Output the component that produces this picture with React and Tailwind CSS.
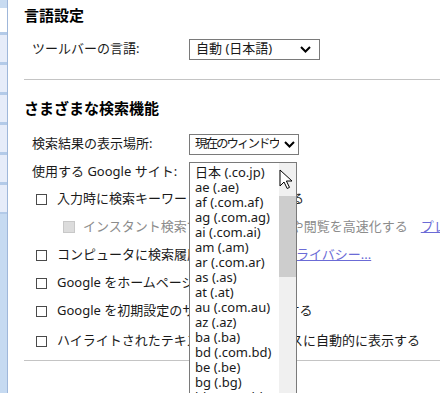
import React from 'react'

const sites = [
  '日本 (.co.jp)',
  'ae (.ae)',
  'af (.com.af)',
  'ag (.com.ag)',
  'ai (.com.ai)',
  'am (.am)',
  'ar (.com.ar)',
  'as (.as)',
  'at (.at)',
  'au (.com.au)',
  'az (.az)',
  'ba (.ba)',
  'bd (.com.bd)',
  'be (.be)',
  'bg (.bg)',
  'bh (.com.bh)',
]

function Chevron() {
  return (
    <svg width="11" height="7" viewBox="0 0 11 7" className="shrink-0">
      <path d="M1 1l4.5 4.5L10 1" stroke="#000" strokeWidth="2" fill="none" />
    </svg>
  )
}

function Checkbox({ disabled = false }) {
  return disabled ? (
    <span className="block w-[12px] h-[12px] bg-[#dcdcdc] border border-[#c8c8c8] shrink-0" />
  ) : (
    <span className="block w-[11px] h-[11px] border border-[#4a4a4a] bg-white shrink-0" />
  )
}

function Sidebar() {
  return (
    <div className="w-[8px] shrink-0 flex flex-col border-r border-[#9fb7da]">
      <div className="h-[8px] bg-[#c8dbf1]" />
      <div className="h-[24px] bg-white" />
      {[0, 1, 2, 3, 4, 5].map((i) => (
        <div key={i} className="h-[30px] bg-[#e6ecf9] border-t-[3px] border-[#b3cae8]" />
      ))}
      <div className="flex-1 bg-[#c6daf1] border-t-[2px] border-[#b3cae8]" />
    </div>
  )
}

function SiteList() {
  return (
    <div className="absolute left-0 top-[1px] z-10 w-[108px] h-[240px] bg-white border-l border-r border-t border-[#7a7a7a] flex">
      <div className="flex-1 pl-[5px] pt-[2px] leading-[15px] text-[13px] text-[#1a1a1a]">
        {sites.map((s) => (
          <div key={s}>{s}</div>
        ))}
      </div>
      <div className="w-[17px] bg-[#f0f0f0] flex flex-col">
        <div className="h-[33px]" />
        <div className="h-[81px] bg-[#cdcdcd]" />
      </div>
      {/* mouse pointer */}
      <svg width="14" height="21" viewBox="0 0 14 21" className="absolute left-[89px] top-[6px]">
        <path d="M1 1v16l4-4 3.2 6.5 2.3-1.1L7.4 12H13z" fill="#fff" stroke="#000" strokeWidth="1" strokeLinejoin="round" />
      </svg>
    </div>
  )
}

export default function App() {
  return (
    <div className="w-[440px] h-[393px] overflow-hidden bg-white flex font-['Noto_Sans','Noto_Sans_CJK_JP',sans-serif] text-[13px] text-[#1a1a1a] whitespace-nowrap">
      <Sidebar />

      <main className="flex-1 pl-[16px] min-w-0">
        {/* 言語設定 */}
        <h2 className="h-[30px] leading-[30px] text-[15px] font-bold text-black">言語設定</h2>
        <div className="mt-[8px] h-[22px] flex items-center pl-[8px]">
          <span className="w-[157px]">ツールバーの言語:</span>
          <div className="w-[131px] h-[21px] border border-[#7a7a7a] flex items-center justify-between pl-[6px] pr-[8px]">
            <span>自動 (日本語)</span>
            <Chevron />
          </div>
        </div>

        <div className="mt-[19px] border-t border-[#c4c4c4]" />

        {/* さまざまな検索機能 */}
        <h2 className="mt-[13px] h-[30px] leading-[30px] text-[15px] font-bold text-black">さまざまな検索機能</h2>
        <div className="mt-[10px] h-[22px] flex items-center pl-[8px]">
          <span className="w-[157px]">検索結果の表示場所:</span>
          <div className="w-[110px] h-[21px] border border-[#7a7a7a] flex items-center justify-between gap-[2px] pl-[5px] pr-[3px] overflow-hidden">
            <span className="min-w-0 overflow-hidden text-[12.5px] tracking-[-2px]">現在のウィンドウ</span>
            <Chevron />
          </div>
        </div>
        <div className="mt-[6px] h-[22px] flex items-center pl-[8px]">
          <span className="w-[157px]">使用する Google サイト:</span>
          <div className="relative self-stretch">
            <SiteList />
          </div>
        </div>

        <div className="mt-[2px]">
          <div className="h-[28px] flex items-center gap-[10px] pl-[12px]">
            <Checkbox />
            <span>入力時に検索キーワードの候補を表示する</span>
          </div>
          <div className="h-[28px] flex items-center gap-[8px] pl-[39px] text-[#8c8c8c]">
            <Checkbox disabled />
            <span>インスタント検索で検索結果の表示や閲覧を高速化する</span>
            <a className="ml-[5px] text-[#6b6bd6] underline">プレビュー</a>
          </div>
          <div className="h-[28px] flex items-center gap-[10px] pl-[12px]">
            <Checkbox />
            <span>コンピュータに検索履歴を保存する</span>
            <a className="ml-[8px] text-[#6b6bd6] underline">プライバシー...</a>
          </div>
          <div className="h-[28px] flex items-center gap-[10px] pl-[12px]">
            <Checkbox />
            <span>Google をホームページに設定する</span>
          </div>
          <div className="h-[28px] flex items-center gap-[10px] pl-[12px]">
            <Checkbox />
            <span>Google を初期設定のサーチエンジンにする</span>
          </div>
          <div className="mt-[2px] h-[28px] flex items-center gap-[10px] pl-[12px]">
            <Checkbox />
            <span>ハイライトされたテキストの訳をボックスに自動的に表示する</span>
          </div>
        </div>

        <div className="mt-[5px] border-t border-[#c4c4c4]" />
      </main>
    </div>
  )
}
